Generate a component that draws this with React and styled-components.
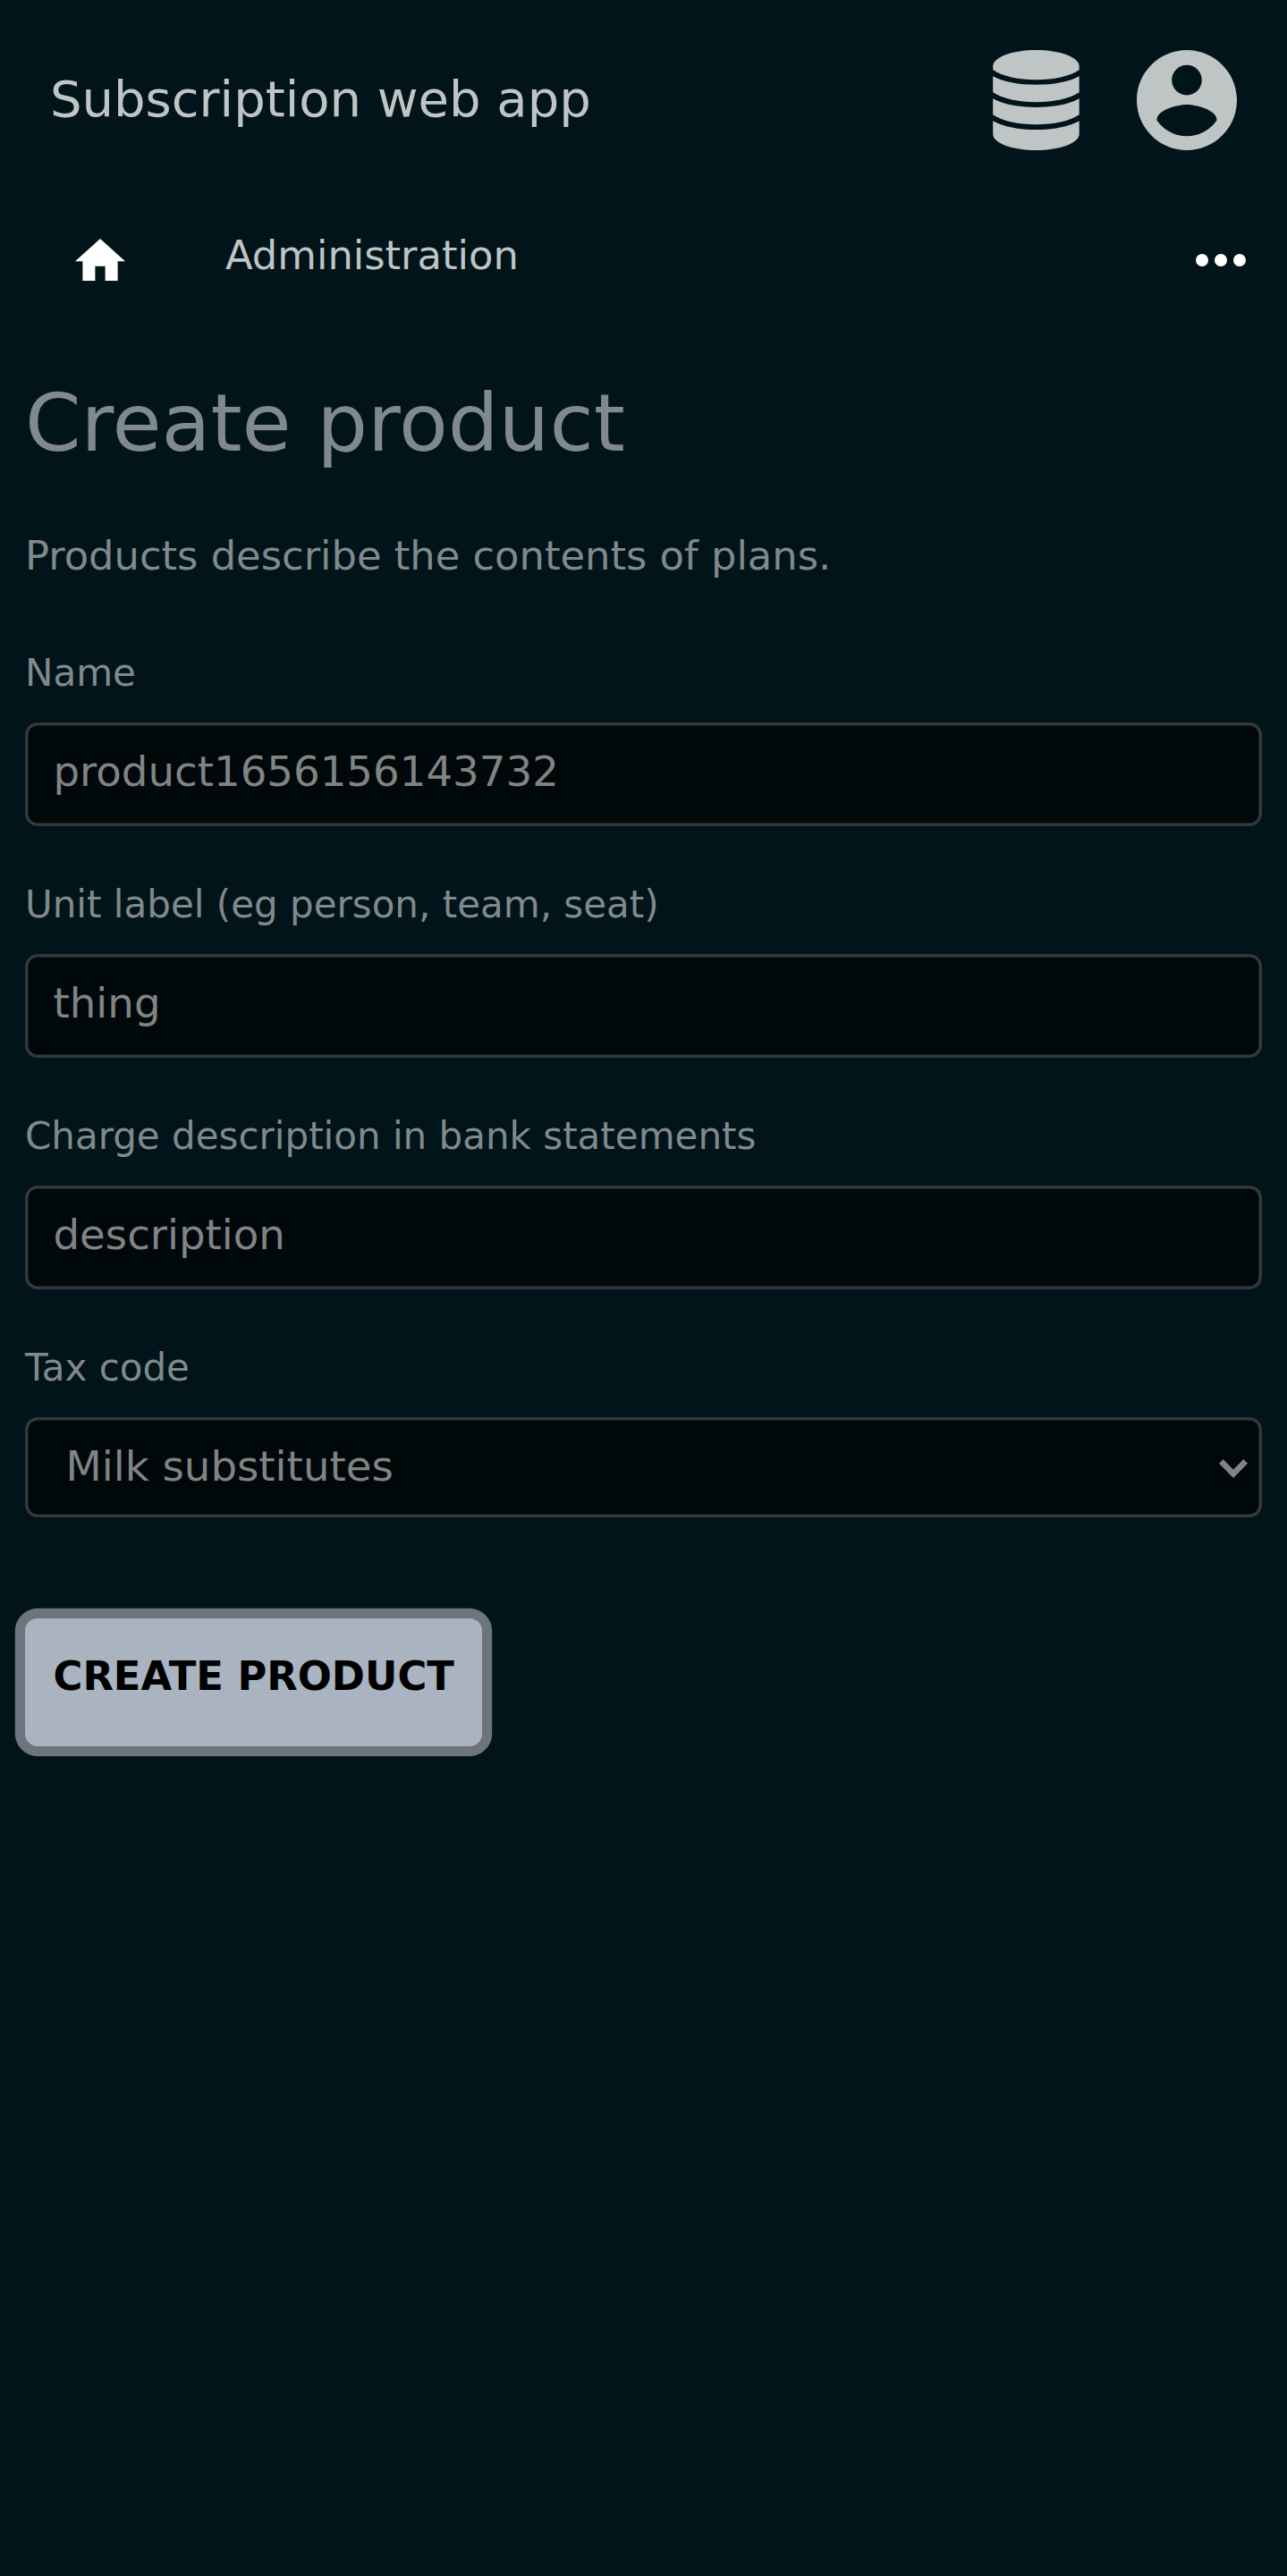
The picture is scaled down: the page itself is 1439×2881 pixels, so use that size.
import React from "react";
import styled, { createGlobalStyle } from "styled-components";

const GlobalStyle = createGlobalStyle`
  *, *::before, *::after { box-sizing: border-box; }
  body {
    margin: 0;
    min-height: 2881px;
    background: #001419;
    font-family: "DejaVu Sans", sans-serif;
    color: #80898c;
  }
`;

const Header = styled.header`
  display: flex;
  align-items: center;
  height: 224px;
  padding: 0 56px;
`;

const AppTitle = styled.div`
  flex: 1;
  margin-bottom: 3px;
  font-size: 56px;
  line-height: 65px;
  color: #bfc4c5;
`;

const HeaderIcons = styled.div`
  display: flex;
  align-items: center;
  gap: 64px;
`;

const Icon = styled.svg`
  display: block;
  flex: none;
  width: ${(p) => p.$w}px;
  height: ${(p) => p.$h}px;
  fill: ${(p) => p.$color || "#bfc4c5"};
`;

const Nav = styled.nav`
  display: flex;
  align-items: center;
  height: 133px;
  padding: 0 46px 0 84px;
`;

const NavLink = styled.a`
  flex: 1;
  margin: -10px 0 0 112px;
  font-size: 44.8px;
  line-height: 52px;
  color: #bfc4c5;
`;

const Main = styled.main`
  padding: 0 28px;
`;

const Heading = styled.h1`
  margin: 0;
  padding-top: 63px;
  font-size: 89.6px;
  font-weight: 400;
  line-height: 106px;
`;

const Lead = styled.p`
  margin: 0;
  padding-top: 68px;
  font-size: 44.8px;
  line-height: 55px;
`;

const Form = styled.form`
  display: flex;
  flex-direction: column;
  align-items: flex-start;
  padding-top: 79px;
`;

const Field = styled.div`
  display: flex;
  flex-direction: column;
  width: 100%;
  height: 259px;
`;

const Label = styled.label`
  margin-bottom: 31px;
  font-size: 42px;
  line-height: 49px;
`;

const control = `
  width: 100%;
  margin: 0;
  border: 0;
  border-radius: 14px;
  outline: none;
  background: #00080a;
  box-shadow: inset 0 0 0 3.5px #33383d;
  color: #808484;
  font-family: inherit;
  font-size: 46.67px;
`;

const Input = styled.input`
  ${control}
  height: 116px;
  padding: 0 31.5px 6px;
`;

const SelectBox = styled.div`
  ${control}
  display: flex;
  align-items: center;
  justify-content: space-between;
  height: 112px;
  padding: 0 16px 2px 45.5px;
`;

const Chevron = styled(Icon)`
  margin-top: 5px;
`;

const SubmitButton = styled.button`
  height: 143px;
  margin-top: 46px;
  padding: 0 31.5px 14px;
  border: 0;
  border-radius: 14px;
  background: #a9b4c0;
  box-shadow: 0 0 0 11.2px #6c747d;
  color: #000;
  font-family: inherit;
  font-size: 44.8px;
  font-weight: 700;
  text-transform: uppercase;
`;

const textFields = [
  { id: "name", label: "Name", value: "product1656156143732" },
  { id: "unit", label: "Unit label (eg person, team, seat)", value: "thing" },
  { id: "charge", label: "Charge description in bank statements", value: "description" },
];

export default function App() {
  return (
    <>
      <GlobalStyle />
      <Header>
        <AppTitle>Subscription web app</AppTitle>
        <HeaderIcons>
          <Icon $w={97} $h={112} viewBox="0 0 97 112">
            <path d="M0.2 18C0.2 8 21.7 0 48.4 0S96.7 8 96.7 18V22C86 29.5 68 33.3 48.4 33.3S11 29.5 0.2 22Z" />
            <path d="M0.2 29.2C12 35.5 29 38.7 48.4 38.7S85 35.5 96.7 29.2V47.3C86 54.5 68 58.2 48.4 58.2S11 54.5 0.2 47.3Z" />
            <path d="M0.2 54.2C12 60.6 29 63.9 48.4 63.9S85 60.6 96.7 54.2V72.3C86 79.5 68 83.3 48.4 83.3S11 79.5 0.2 72.3Z" />
            <path d="M0.2 79.2C12 85.7 29 89 48.4 89S85 85.7 96.7 79.2V94C96.7 104 75.3 112 48.4 112S0.2 104 0.2 94Z" />
          </Icon>
          <Icon $w={112} $h={112} viewBox="2 2 20 20">
            <path d="M12 2C6.48 2 2 6.48 2 12s4.48 10 10 10 10-4.48 10-10S17.52 2 12 2zm0 3c1.66 0 3 1.34 3 3s-1.34 3-3 3-3-1.34-3-3 1.34-3 3-3zm0 14.2c-2.5 0-4.71-1.28-6-3.22.03-1.99 4-3.08 6-3.08 1.99 0 5.97 1.09 6 3.08-1.29 1.94-3.5 3.22-6 3.22z" />
          </Icon>
        </HeaderIcons>
      </Header>
      <Nav>
        <Icon $w={56} $h={47.6} $color="#fff" viewBox="2 3 20 17">
          <path d="M10 20v-6h4v6h5v-8h3L12 3 2 12h3v8z" />
        </Icon>
        <NavLink>Administration</NavLink>
        <Icon $w={56} $h={14} $color="#fff" viewBox="4 10 16 4">
          <circle cx="6" cy="12" r="2" />
          <circle cx="12" cy="12" r="2" />
          <circle cx="18" cy="12" r="2" />
        </Icon>
      </Nav>
      <Main>
        <Heading>Create product</Heading>
        <Lead>Products describe the contents of plans.</Lead>
        <Form>
          {textFields.map((f) => (
            <Field key={f.id}>
              <Label htmlFor={f.id}>{f.label}</Label>
              <Input id={f.id} defaultValue={f.value} />
            </Field>
          ))}
          <Field>
            <Label>Tax code</Label>
            <SelectBox>
              Milk substitutes
              <Chevron $w={32} $h={21} $color="#808484" viewBox="0 0 32 21">
                <path d="M4.6 0L16 11.4 27.4 0 32 4.7 16 21 0 4.7Z" />
              </Chevron>
            </SelectBox>
          </Field>
          <SubmitButton type="button">Create product</SubmitButton>
        </Form>
      </Main>
    </>
  );
}
